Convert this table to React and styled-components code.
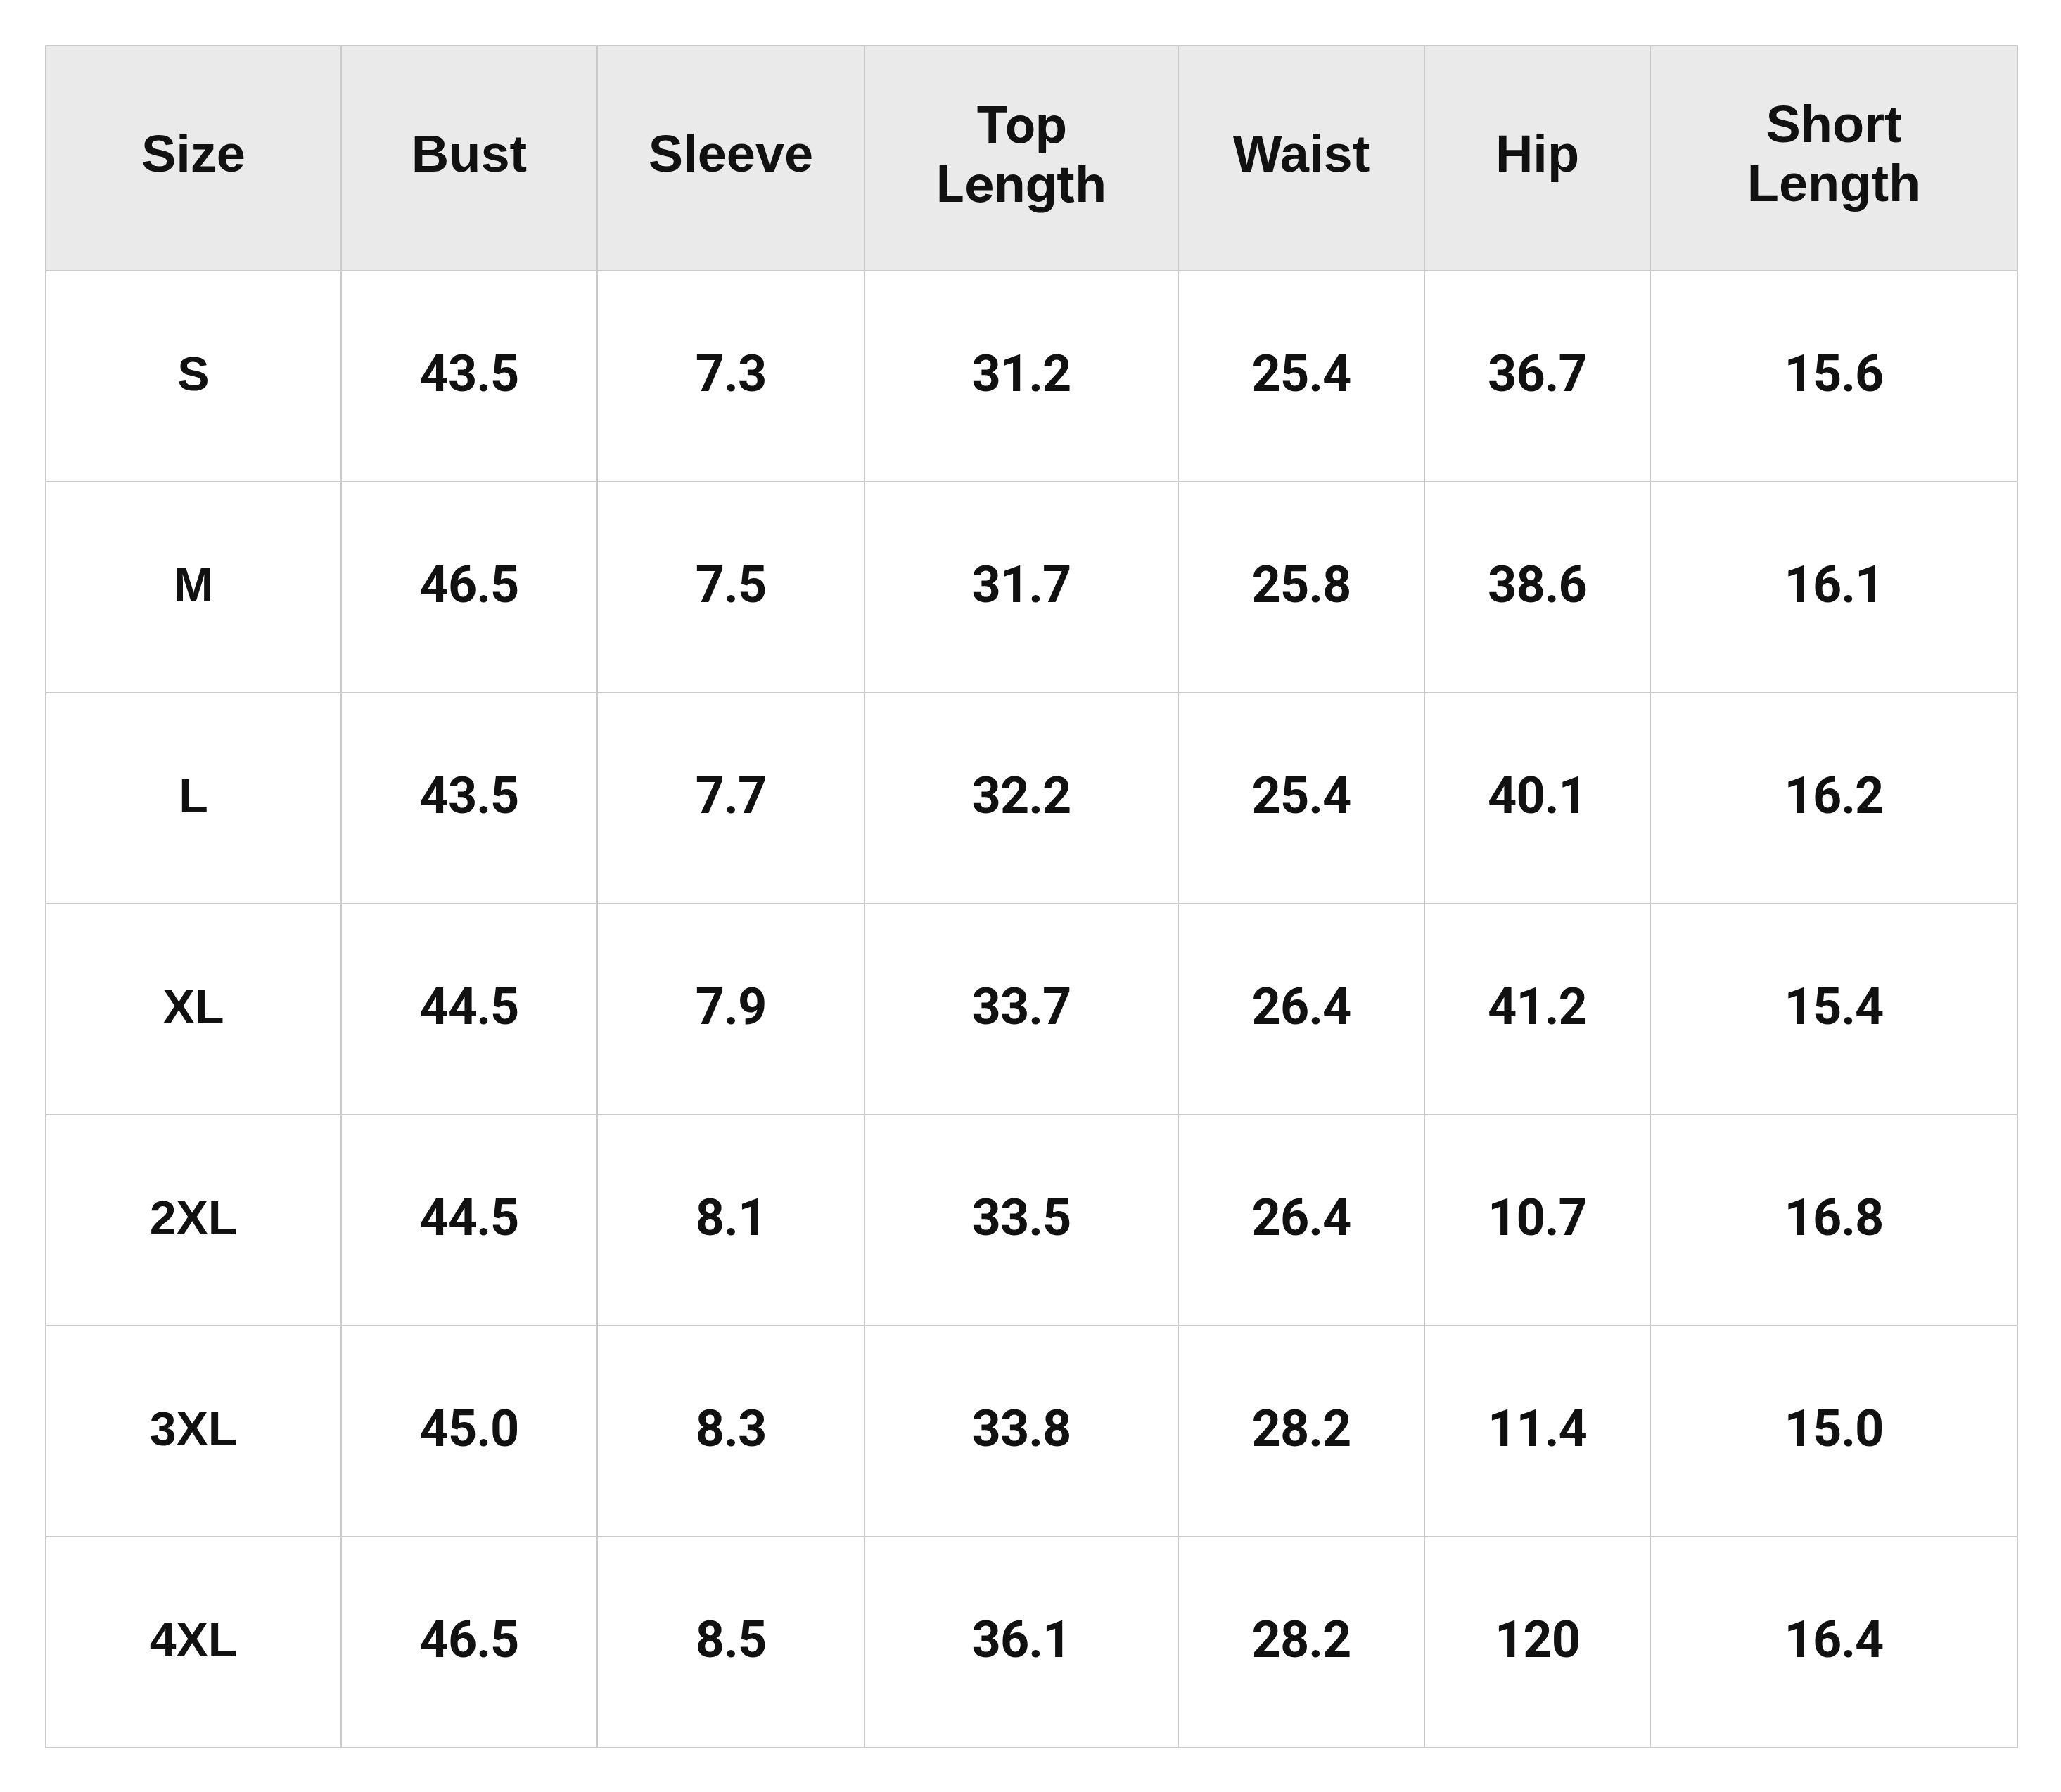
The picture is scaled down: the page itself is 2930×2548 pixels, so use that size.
import React from 'react'
import styled, { createGlobalStyle } from 'styled-components'

const Global = createGlobalStyle`
  html, body {
    margin: 0;
    padding: 0;
    background: #ffffff;
  }
  body {
    width: 2930px;
    height: 2548px;
    font-family: "Liberation Sans", Arial, sans-serif;
  }
`

const fonts = {
  helv: '"Liberation Sans", Arial, sans-serif',
  geo: 'Inter, "Noto Sans", sans-serif',
  num: 'Roboto, "Noto Sans", sans-serif',
}

const Page = styled.div`
  padding: 64px 0 0 64px;
`

const Table = styled.table`
  border-collapse: collapse;
  table-layout: fixed;
  width: 2803px;
  color: #111111;
`

const HeadCell = styled.th`
  background: #eaeaea;
  border: 2px solid #c9c9c9;
  height: 306px;
  padding: 0 0 12px;
  text-align: center;
  vertical-align: middle;
  font-family: ${p => fonts[p.$face]};
  font-weight: 700;
  font-size: ${p => (p.$face === 'geo' ? '71px' : '74px')};
  line-height: 84px;
`

const Cell = styled.td`
  border: 2px solid #c9c9c9;
  height: 290px;
  padding: 0 0 8px;
  text-align: center;
  vertical-align: middle;
  font-family: ${p => fonts[p.$face]};
  font-weight: 700;
  font-size: ${p => (p.$face === 'num' ? '72px' : '68px')};
  letter-spacing: ${p => (p.$face === 'num' ? '-1px' : '0')};
`

const columns = [
  { label: ['Size'], width: 420, face: 'helv' },
  { label: ['Bust'], width: 364, face: 'helv' },
  { label: ['Sleeve'], width: 380, face: 'helv' },
  { label: ['Top', 'Length'], width: 446, face: 'geo' },
  { label: ['Waist'], width: 350, face: 'helv' },
  { label: ['Hip'], width: 321, face: 'helv' },
  { label: ['Short', 'Length'], width: 522, face: 'helv' },
]

const rows = [
  ['S', '43.5', '7.3', '31.2', '25.4', '36.7', '15.6'],
  ['M', '46.5', '7.5', '31.7', '25.8', '38.6', '16.1'],
  ['L', '43.5', '7.7', '32.2', '25.4', '40.1', '16.2'],
  ['XL', '44.5', '7.9', '33.7', '26.4', '41.2', '15.4'],
  ['2XL', '44.5', '8.1', '33.5', '26.4', '10.7', '16.8'],
  ['3XL', '45.0', '8.3', '33.8', '28.2', '11.4', '15.0'],
  ['4XL', '46.5', '8.5', '36.1', '28.2', '120', '16.4'],
]

export default function App() {
  return (
    <Page>
      <Global />
      <Table>
        <colgroup>
          {columns.map((c, i) => (
            <col key={i} style={{ width: c.width }} />
          ))}
        </colgroup>
        <thead>
          <tr>
            {columns.map((c, i) => (
              <HeadCell key={i} $face={c.face}>
                {c.label.map((l, j) => (
                  <React.Fragment key={j}>
                    {j > 0 && <br />}
                    {l}
                  </React.Fragment>
                ))}
              </HeadCell>
            ))}
          </tr>
        </thead>
        <tbody>
          {rows.map((r, i) => (
            <tr key={i}>
              {r.map((v, j) => (
                <Cell key={j} $face={j === 0 ? 'helv' : 'num'}>
                  {v}
                </Cell>
              ))}
            </tr>
          ))}
        </tbody>
      </Table>
    </Page>
  )
}
